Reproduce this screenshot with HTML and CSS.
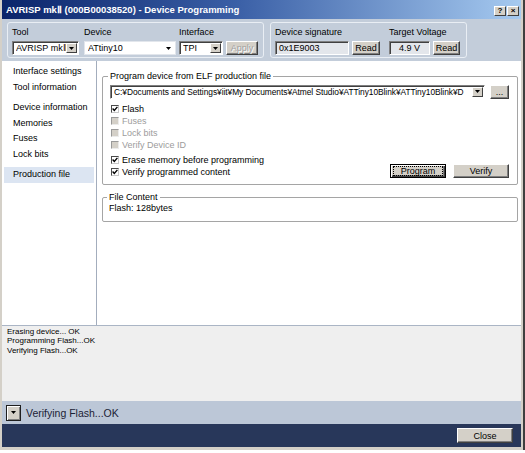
FILE: index.html
```html
<!DOCTYPE html>
<html>
<head>
<meta charset="utf-8">
<title>Device Programming</title>
<link rel="stylesheet" href="styles.css">
</head>
<body>
<div class="frame">
<div class="win">
  <div class="titlebar">
    <span class="title">AVRISP mkⅡ (000B00038520) - Device Programming</span>
    <div class="capbtns"><span class="capbtn">?</span><span class="capbtn">×</span></div>
  </div>

  <div class="toolbar">
    <div class="tgroup g1">
      <div class="fld f-tool">
        <div class="lbl">Tool</div>
        <div class="ctl">
          <div class="combo w-tool"><span class="val">AVRISP mkⅡ</span><span class="ddbtn"><svg width="5" height="3" viewBox="0 0 5 3"><path d="M0 0H5L2.5 3Z" fill="#000"/></svg></span></div>
        </div>
      </div>
      <div class="fld f-dev">
        <div class="lbl">Device</div>
        <div class="ctl">
          <div class="combo flat w-dev"><span class="val">ATtiny10</span><span class="ddarrow"><svg width="5" height="3" viewBox="0 0 5 3"><path d="M0 0H5L2.5 3Z" fill="#000"/></svg></span></div>
        </div>
      </div>
      <div class="fld">
        <div class="lbl">Interface</div>
        <div class="ctl">
          <div class="combo w-if"><span class="val">TPI</span><span class="ddbtn"><svg width="5" height="3" viewBox="0 0 5 3"><path d="M0 0H5L2.5 3Z" fill="#000"/></svg></span></div>
          <button class="btn w-apply" disabled>Apply</button>
        </div>
      </div>
    </div>
    <div class="tgroup g2">
      <div class="fld f-sig">
        <div class="lbl">Device signature</div>
        <div class="ctl">
          <div class="ro w-sig">0x1E9003</div>
          <button class="btn w-read">Read</button>
        </div>
      </div>
      <div class="fld">
        <div class="lbl">Target Voltage</div>
        <div class="ctl">
          <div class="ro center w-volt">4.9 V</div>
          <button class="btn w-read2">Read</button>
        </div>
      </div>
    </div>
  </div>

  <div class="content">
    <div class="sidebar">
      <div class="nav">Interface settings</div>
      <div class="nav">Tool information</div>
      <div class="nav sep">Device information</div>
      <div class="nav">Memories</div>
      <div class="nav">Fuses</div>
      <div class="nav">Lock bits</div>
      <div class="nav sep sel">Production file</div>
    </div>
    <div class="main">
      <fieldset class="fs-prog">
        <legend>Program device from ELF production file</legend>
        <div class="filerow">
          <div class="combo w-file"><span class="val">C:¥Documents and Settings¥iit¥My Documents¥Atmel Studio¥ATTiny10Blink¥ATTiny10Blink¥D</span><span class="ddbtn"><svg width="5" height="3" viewBox="0 0 5 3"><path d="M0 0H5L2.5 3Z" fill="#000"/></svg></span></div>
          <button class="btn w-browse">...</button>
        </div>
        <div class="checks">
          <div class="chk"><span class="cb"><svg width="6" height="6" viewBox="0 0 6 6"><path d="M0.6 2.6L2.3 4.4L5.4 0.9" fill="none" stroke="#000" stroke-width="1.4"/></svg></span><span>Flash</span></div>
          <div class="chk dis"><span class="cb"></span><span>Fuses</span></div>
          <div class="chk dis"><span class="cb"></span><span>Lock bits</span></div>
          <div class="chk dis"><span class="cb"></span><span>Verify Device ID</span></div>
        </div>
        <div class="progrow">
          <div class="checks">
            <div class="chk"><span class="cb"><svg width="6" height="6" viewBox="0 0 6 6"><path d="M0.6 2.6L2.3 4.4L5.4 0.9" fill="none" stroke="#000" stroke-width="1.4"/></svg></span><span>Erase memory before programming</span></div>
            <div class="chk"><span class="cb"><svg width="6" height="6" viewBox="0 0 6 6"><path d="M0.6 2.6L2.3 4.4L5.4 0.9" fill="none" stroke="#000" stroke-width="1.4"/></svg></span><span>Verify programmed content</span></div>
          </div>
          <div class="btns">
            <button class="btn def w-act"><span class="focus">Program</span></button>
            <button class="btn w-act">Verify</button>
          </div>
        </div>
      </fieldset>
      <fieldset class="fs-content">
        <legend>File Content</legend>
        <div class="fc-text">Flash: 128bytes</div>
      </fieldset>
    </div>
  </div>

  <div class="log">
    <div>Erasing device... OK</div>
    <div>Programming Flash...OK</div>
    <div>Verifying Flash...OK</div>
  </div>

  <div class="status">
    <span class="sbtn"><svg width="5" height="3" viewBox="0 0 5 3"><path d="M0 0H5L2.5 3Z" fill="#000"/></svg></span>
    <span class="stext">Verifying Flash...OK</span>
  </div>

  <div class="footer">
    <button class="btn w-close">Close</button>
  </div>
</div>
</div>
</body>
</html>
```

FILE: styles.css
```css
* { box-sizing: border-box; }
html, body { margin: 0; padding: 0; }
body {
  width: 525px;
  height: 453px;
  overflow: hidden;
  background: #ffffff;
  font-family: "Liberation Sans", Arial, sans-serif;
  font-size: 9px;
  color: #000;
}

.frame {
  width: 525px;
  height: 450px;
  border-right: 2px solid #3f3f3f;
}
.win {
  height: 450px;
  display: flex;
  flex-direction: column;
  background: #efefef;
  border-left: 2px solid #d4d0c8;
  border-right: 2px solid #d4d0c8;
  border-bottom: 3px solid #d4d0c8;
}

/* title bar */
.titlebar {
  flex: none;
  height: 19px;
  display: flex;
  align-items: center;
  padding: 0 2px 0 4px;
  background: linear-gradient(90deg, #0a246a 0%, #3a5fa6 45%, #a6caf0 100%);
}
.title {
  flex: 1;
  color: #fff;
  font-weight: bold;
  font-size: 9.5px;
  white-space: nowrap;
}
.capbtns { display: flex; gap: 1px; align-self: flex-end; margin-bottom: 3px; }
.capbtn {
  width: 12px;
  height: 10px;
  background: #d4d0c8;
  border: 1px solid;
  border-color: #fff #404040 #404040 #fff;
  font-size: 8px;
  font-weight: bold;
  line-height: 8px;
  text-align: center;
}

/* toolbar */
.toolbar {
  flex: none;
  height: 42px;
  display: flex;
  gap: 6px;
  padding: 3px 0 0 5px;
  background: #c3cdda;
}
.tgroup {
  height: 36px;
  display: flex;
  border: 1px solid #e9eef4;
  border-radius: 3px;
  padding: 4px 0 0 4px;
}
.g1 { width: 257px; }
.g2 { width: 197px; }
.fld { display: flex; flex-direction: column; }
.f-tool { margin-right: 5px; }
.f-dev { margin-right: 3px; }
.f-sig { margin-right: 9px; }
.lbl { height: 11px; line-height: 11px; white-space: nowrap; }
.ctl { display: flex; gap: 3px; margin-top: 3px; }

.combo {
  height: 14px;
  display: flex;
  align-items: center;
  background: #fff;
  border: 1px solid;
  border-color: #808080 #fff #fff #808080;
  box-shadow: inset 1px 1px #404040;
  padding-left: 3px;
  overflow: hidden;
}
.combo .val {
  flex: 1;
  min-width: 0;
  white-space: nowrap;
  overflow: hidden;
  line-height: 12px;
}
.combo.flat {
  border: 1px solid #e2e6ec;
  box-shadow: none;
}
.ddbtn {
  flex: none;
  width: 11px;
  height: 10px;
  margin-right: 1px;
  display: flex;
  align-items: center;
  justify-content: center;
  background: #d4d0c8;
  border: 1px solid;
  border-color: #fff #404040 #404040 #fff;
}
.ddarrow { flex: none; display: flex; margin-right: 4px; }

.w-tool { width: 67px; }
.w-dev { width: 92px; }
.w-if { width: 44px; }
.w-apply { width: 32px; }
.w-sig { width: 74px; }
.w-read { width: 28px; }
.w-volt { width: 41px; }
.w-read2 { width: 27px; }

.ro {
  height: 14px;
  background: #e3e6eb;
  border: 1px solid;
  border-color: #808080 #fff #fff #808080;
  box-shadow: inset 1px 1px #404040;
  padding-left: 3px;
  line-height: 12px;
  white-space: nowrap;
}
.ro.center { text-align: center; padding-left: 0; }

.btn {
  height: 14px;
  padding: 0;
  margin: 0;
  font-family: inherit;
  font-size: 9px;
  line-height: 12px;
  color: #000;
  background: #d4d0c8;
  border: 1px solid;
  border-color: #fff #404040 #404040 #fff;
  box-shadow: inset -1px -1px #808080;
  text-align: center;
}
.btn:disabled { color: #a0a0a0; text-shadow: 1px 1px #fff; }

/* main content */
.content {
  flex: none;
  height: 265px;
  display: flex;
  background: #fff;
  border-bottom: 1px solid #aab5c5;
}
.sidebar {
  width: 95px;
  flex: none;
  padding: 3px 2px 0 2px;
  border-right: 1px solid #a3adbd;
}
.nav {
  height: 15.5px;
  line-height: 15.5px;
  padding-left: 9px;
  white-space: nowrap;
}
.nav.sep { margin-top: 5px; }
.nav.sel { background: #dce5f2; }

.main {
  flex: 1;
  padding: 10px 4px 0 5px;
}
fieldset {
  margin: 0;
  min-width: 0;
  border: 1px solid #a5a5a5;
  border-radius: 2px;
}
legend {
  padding: 0 2px;
  margin-left: -2px;
  font-size: 9px;
  line-height: 10px;
}
.fs-prog { padding: 3px 8px 6px 7px; }
.filerow { display: flex; align-items: center; gap: 5px; height: 15px; }
.w-file { width: 375px; }
.w-file .val { font-size: 8.4px; letter-spacing: -0.05px; }
.w-browse { width: 19px; }

.checks { display: flex; flex-direction: column; }
.fs-prog > .checks { margin-top: 4px; }
.chk {
  height: 12px;
  display: flex;
  align-items: center;
  gap: 3px;
  white-space: nowrap;
}
.cb {
  width: 8px;
  height: 8px;
  margin-left: 1px;
  display: flex;
  align-items: center;
  justify-content: center;
  background: #fff;
  border: 1px solid;
  border-color: #4a4a4a #c8c8c8 #c8c8c8 #4a4a4a;
}
.chk.dis { color: #9c9c9c; }
.chk.dis .cb {
  background: #d4d0c8;
  border-color: #9a9a9a #ececec #ececec #9a9a9a;
}
.progrow {
  display: flex;
  justify-content: space-between;
  align-items: flex-end;
  margin-top: 3px;
}
.btns { display: flex; gap: 7px; }
.w-act { width: 56px; }
.btn.def {
  border: 1px solid #000;
  box-shadow: inset 1px 1px #fff, inset -1px -1px #404040, inset -2px -2px #808080;
  padding: 1px 2px;
  line-height: 10px;
}
.focus {
  display: block;
  border: 1px dotted #000;
  line-height: 8px;
  height: 10px;
}

.fs-content {
  margin-top: 7px;
  padding: 1px 8px 8px 6px;
}
.fc-text { line-height: 10px; }

/* log */
.log {
  flex: none;
  height: 75px;
  padding: 1px 7px 0 5px;
  font-size: 8px;
  line-height: 9.3px;
  background: #efefef;
}

/* status */
.status {
  flex: none;
  height: 23px;
  display: flex;
  align-items: center;
  gap: 5px;
  padding-left: 4px;
  background: #bcc7d7;
}
.sbtn {
  width: 15px;
  height: 16px;
  display: flex;
  align-items: center;
  justify-content: center;
  background: #d4d0c8;
  border: 1px solid #1e1e1e;
  box-shadow: inset 1px 1px #fff, inset -1px -1px #808080;
}
.stext { font-size: 10.5px; color: #1b2236; white-space: nowrap; }

/* footer */
.footer {
  flex: 1;
  display: flex;
  justify-content: flex-end;
  align-items: center;
  padding-right: 8px;
  background: #28375a;
}
.w-close { width: 56px; height: 15px; }
```
